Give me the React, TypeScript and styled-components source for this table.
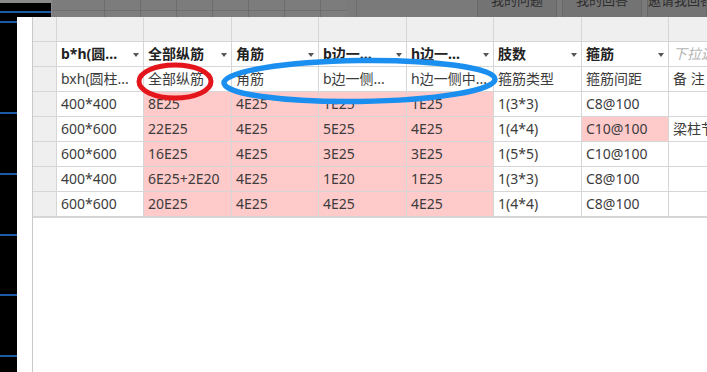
import styled, { createGlobalStyle } from "styled-components";

const GlobalStyle = createGlobalStyle`
    html, body {
        margin: 0;
        padding: 0;
        background: #ffffff;
        overflow: hidden;
    }
    body {
        font-family: "Noto Sans", "Noto Sans CJK SC", sans-serif;
    }
`;

const Screen = styled.div`
    width: 707px;
    height: 372px;
    display: flex;
    flex-direction: column;
    overflow: hidden;
`;

const TopBar = styled.div`
    height: 17px;
    flex: none;
    display: flex;
    background: #7a7a7a;
    overflow: hidden;
`;

const Corner = styled.div`
    width: 52px;
    flex: none;
    border-top: 3px solid #8a8a8a;
    border-right: 1px solid #8c8c8c;
    box-sizing: border-box;
    background: linear-gradient(
        to bottom,
        #000 0,
        #000 8px,
        #1d5aa6 8px,
        #1d5aa6 10px,
        #000 10px
    );
`;

const DimGrid = styled.div`
    display: flex;
    padding-left: 17px;
    width: 295px;
    flex: none;
    box-sizing: border-box;
    background: linear-gradient(
        to bottom,
        #7c7c7c 0,
        #7c7c7c 10px,
        #6f6f6f 10px,
        #6f6f6f 11px,
        #7e7e7e 11px
    );
`;

const DimCell = styled.div`
    width: 36px;
    flex: none;
    border-right: 1px solid #6d6d6d;
    box-sizing: border-box;
`;

const Spacer = styled.div`
    flex: 1;
`;

const Tabs = styled.div`
    display: flex;
    gap: 5px;
    padding-left: 3px;
`;

const Tab = styled.div<{ $w: number }>`
    width: ${({ $w }) => $w}px;
    box-sizing: border-box;
    background: #737373;
    border-left: 1px solid #686868;
    border-right: 1px solid #686868;
    color: #2e2e2e;
    font-size: 13px;
    line-height: 13px;
    text-align: center;
    white-space: nowrap;
    overflow: hidden;

    span {
        display: block;
        margin-top: -6px;
    }
`;

const Body = styled.div`
    flex: 1;
    display: flex;
    min-height: 0;
`;

const SideStrip = styled.div`
    width: 17px;
    flex: none;
    background: #000;
    display: flex;
    flex-direction: column;
`;

const SideSlot = styled.div<{ $h: number }>`
    height: ${({ $h }) => $h}px;
    flex: none;
    border-bottom: 2px solid #1d5aa6;
`;

const Dialog = styled.div`
    flex: 1;
    position: relative;
    background: #ffffff;
    padding-left: 15px;
    display: flex;
`;

const Sheet = styled.div`
    flex: 1;
    border-left: 1px solid #c9c9c9;
    overflow: hidden;
`;

const Grid = styled.div`
    display: grid;
    grid-template-columns: 24px 87px 88px 87px 88px 87px 88px 87px 120px;
    grid-auto-rows: 25px;
    border-bottom: 1px solid #d6d6d6;
    width: max-content;
`;

const Cell = styled.div<{
    $bg?: string;
    $bold?: boolean;
    $hint?: boolean;
}>`
    box-sizing: border-box;
    border-right: 1px solid #d6d6d6;
    border-bottom: 1px solid #d6d6d6;
    background: ${({ $bg }) => $bg || "#ffffff"};
    padding: 0 4px 0 4px;
    font-size: 14px;
    line-height: 24px;
    white-space: nowrap;
    overflow: hidden;
    display: flex;
    align-items: center;
    justify-content: space-between;
    color: ${({ $hint }) => ($hint ? "#b4b4b4" : "#3c3c3c")};
    font-weight: ${({ $bold }) => ($bold ? 700 : 400)};
    font-style: ${({ $hint }) => ($hint ? "italic" : "normal")};
    ${({ $bold }) => $bold && "color: #222;"}
`;

const HeadCell = styled(Cell)`
    background: #efefef;
`;

const Caret = styled.span`
    width: 0;
    height: 0;
    flex: none;
    border-left: 3px solid transparent;
    border-right: 3px solid transparent;
    border-top: 4px solid #555;
    margin-top: 1px;
`;

const Marks = styled.svg`
    position: absolute;
    left: 0;
    top: 0;
    width: 690px;
    height: 120px;
    pointer-events: none;
`;

const PINK = "#ffcaca";

type Col = { head: string; sub: string; hint?: boolean };

const columns: Col[] = [
    { head: "b*h(圆...", sub: "bxh(圆柱..." },
    { head: "全部纵筋", sub: "全部纵筋" },
    { head: "角筋", sub: "角筋" },
    { head: "b边一...", sub: "b边一侧..." },
    { head: "h边一...", sub: "h边一侧中..." },
    { head: "肢数", sub: "箍筋类型" },
    { head: "箍筋", sub: "箍筋间距" },
    { head: "下拉选择", sub: "备 注", hint: true },
];

const rows: string[][] = [
    ["400*400", "8E25", "4E25", "1E25", "1E25", "1(3*3)", "C8@100", ""],
    ["600*600", "22E25", "4E25", "5E25", "4E25", "1(4*4)", "C10@100", "梁柱节点..."],
    ["600*600", "16E25", "4E25", "3E25", "3E25", "1(5*5)", "C10@100", ""],
    ["400*400", "6E25+2E20", "4E25", "1E20", "1E25", "1(3*3)", "C8@100", ""],
    ["600*600", "20E25", "4E25", "4E25", "4E25", "1(4*4)", "C8@100", ""],
];

function cellBg(row: number, col: number) {
    if (col >= 1 && col <= 4) return PINK;
    if (row === 1 && col === 6) return PINK;
    return undefined;
}

export default function App() {
    return (
        <>
            <GlobalStyle />
            <Screen>
                <TopBar>
                    <Corner />
                    <DimGrid>
                        {Array.from({ length: 8 }).map((_, i) => (
                            <DimCell key={i} />
                        ))}
                    </DimGrid>
                    <Spacer />
                    <Tabs>
                        <Tab $w={80}>
                            <span>我的问题</span>
                        </Tab>
                        <Tab $w={80}>
                            <span>我的回答</span>
                        </Tab>
                        <Tab $w={60}>
                            <span>邀请我回答</span>
                        </Tab>
                    </Tabs>
                </TopBar>
                <Body>
                    <SideStrip>
                        <SideSlot $h={4} />
                        <SideSlot $h={89} />
                        <SideSlot $h={59} />
                        <SideSlot $h={59} />
                        <SideSlot $h={58} />
                        <SideSlot $h={59} />
                    </SideStrip>
                    <Dialog>
                        <Sheet>
                            <Grid>
                                <HeadCell />
                                {columns.map((_, i) => (
                                    <HeadCell key={`c${i}`} />
                                ))}

                                <HeadCell />
                                {columns.map((c, i) => (
                                    <Cell key={`h${i}`} $bold={!c.hint} $hint={c.hint}>
                                        {c.head}
                                        {!c.hint && <Caret />}
                                    </Cell>
                                ))}

                                <HeadCell />
                                {columns.map((c, i) => (
                                    <Cell key={`s${i}`}>{c.sub}</Cell>
                                ))}

                                {rows.map((r, ri) => (
                                    <>
                                        <HeadCell key={`r${ri}`} />
                                        {r.map((v, ci) => (
                                            <Cell key={`${ri}-${ci}`} $bg={cellBg(ri, ci)}>
                                                {v}
                                            </Cell>
                                        ))}
                                    </>
                                ))}
                            </Grid>
                        </Sheet>
                        <Marks viewBox="0 0 690 120">
                            <ellipse
                                cx={158}
                                cy={64.5}
                                rx={36}
                                ry={16.5}
                                fill="none"
                                stroke="#e5161b"
                                strokeWidth={5}
                            />
                            <ellipse
                                cx={342.5}
                                cy={64}
                                rx={135.5}
                                ry={20.5}
                                fill="none"
                                stroke="#1b8ff0"
                                strokeWidth={5.5}
                                transform="rotate(-0.8 342.5 64)"
                            />
                        </Marks>
                    </Dialog>
                </Body>
            </Screen>
        </>
    );
}
